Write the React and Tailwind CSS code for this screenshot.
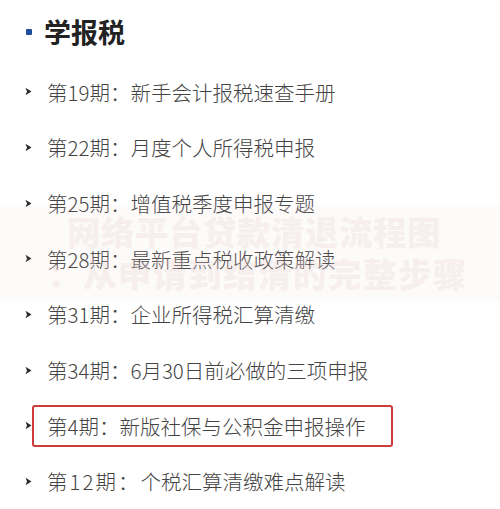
import React from "react";

const items = [
  { p: "第19期：", t: "新手会计报税速查手册" },
  { p: "第22期：", t: "月度个人所得税申报" },
  { p: "第25期：", t: "增值税季度申报专题" },
  { p: "第28期：", t: "最新重点税收政策解读" },
  { p: "第31期：", t: "企业所得税汇算清缴" },
  { p: "第34期：", t: "6月30日前必做的三项申报" },
  { p: "第4期：", t: "新版社保与公积金申报操作", box: true },
  { p: "第12期：", t: "个税汇算清缴难点解读", spaced: true },
];

function Tri() {
  return (
    <svg width="7" height="9" viewBox="0 0 7 9" className="shrink-0">
      <path d="M0.5 0.8 L6.5 4.5 L0.5 8.2 L2 4.5 Z" fill="#2a2a2a" />
    </svg>
  );
}

export default function App() {
  return (
    <div
      className="relative w-[500px] h-[509px] bg-white overflow-hidden"
      style={{ fontFamily: '"Noto Sans CJK SC", "Noto Sans", sans-serif' }}
    >
      <div className="flex items-center h-[62px] pl-[26px] pt-[1px]">
        <div className="w-[6px] h-[6px] bg-[#1d4f9e] rounded-[1px]" />
        <div className="ml-[12px] text-[27px] font-bold text-[#222] leading-none">学报税</div>
      </div>
      <div className="flex flex-col pt-[2px]">
        {items.map((it, i) => (
          <div key={i} className="flex items-center h-[55.7px] pl-[25px]">
            <Tri />
            {it.box ? (
              <div className="ml-[0px] flex items-center h-[42px] w-[361px] border-2 border-[#cf3a3a] rounded-[3px] pl-[13px] text-[20.5px] font-light text-[#444] leading-none">
                <span>{it.p}</span>
                <span>{it.t}</span>
              </div>
            ) : (
              <div className="ml-[15px] flex items-center text-[20.5px] font-light text-[#444] leading-none">
                <span className={it.spaced ? "tracking-[2px]" : ""}>{it.p}</span>
                <span>{it.t}</span>
              </div>
            )}
          </div>
        ))}
      </div>
      <div className="absolute left-0 top-[205px] w-[500px] h-[96px] bg-[#e8b8b8]/[0.07] pointer-events-none">
        <div className="flex flex-col items-start text-[33.5px] font-black text-[#e9d2d2]/[0.3] leading-[42px] pt-[5px]">
          <div className="ml-[67px] tracking-[0.5px]">网络平台贷款清退流程图</div>
          <div className="ml-[48px] tracking-[1.5px]">：从申请到结清的完整步骤</div>
        </div>
      </div>
    </div>
  );
}
